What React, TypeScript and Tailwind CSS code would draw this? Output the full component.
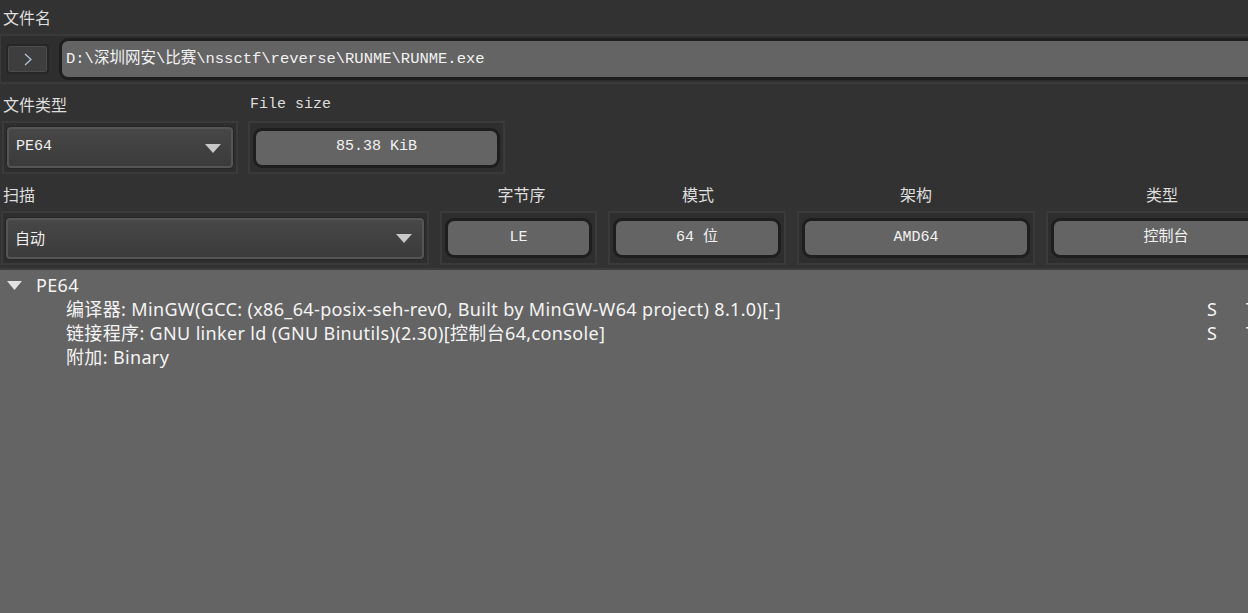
import React from "react";

const mono = "font-['Liberation_Mono','Noto_Sans_CJK_SC',monospace]";
const cjk = "font-['Noto_Sans_CJK_SC','Noto_Sans',sans-serif]";
const ui = "font-['Noto_Sans','Noto_Sans_CJK_SC',sans-serif]";

function Frame({ className, children }: { className?: string; children: React.ReactNode }) {
  return (
    <div className={"shrink-0 border-2 border-[#3a3a3a] bg-[#2e2e2e] flex items-center " + (className ?? "")}>
      {children}
    </div>
  );
}

function Value({ text, className }: { text: string; className?: string }) {
  return (
    <div
      className={
        "h-[40px] flex items-center justify-center rounded-[9px] border-[3px] border-[#1e1e1e] bg-[#646464] text-[15px] text-[#f2f2f2] " +
        mono +
        " " +
        (className ?? "")
      }
    >
      {text}
    </div>
  );
}

function Select({ text, className }: { text: string; className?: string }) {
  return (
    <div
      className={
        "h-[41px] flex items-center justify-between rounded-[4px] border-2 border-[#555555] bg-gradient-to-b from-[#474747] to-[#3b3b3b] pl-[7px] pr-[10px] text-[15px] text-[#f0f0f0] shadow-[0_0_0_1px_#262626] " +
        mono +
        " " +
        (className ?? "")
      }
    >
      <span>{text}</span>
      <svg width="16" height="10" viewBox="0 0 16 10">
        <polygon points="0,1 16,1 8,10" fill="#c8c8c8" />
      </svg>
    </div>
  );
}

const rows = [
  "编译器: MinGW(GCC: (x86_64-posix-seh-rev0, Built by MinGW-W64 project) 8.1.0)[-]",
  "链接程序: GNU linker ld (GNU Binutils)(2.30)[控制台64,console]",
];

export default function App() {
  return (
    <div className="h-[613px] w-[1248px] overflow-hidden bg-[#323232] flex flex-col">
      <div className={"h-[34px] flex items-center pl-[3px] text-[16px] text-[#dedede] " + cjk}>文件名</div>

      <Frame className="h-[50px] -mx-px pl-[5px] gap-[10px] w-[1300px]">
        <div className="w-[43px] h-[30px] rounded-[4px] border-2 border-[#262626] bg-[#3e3e3e] shadow-[inset_0_0_0_1px_#4c4c4c] flex items-center justify-center">
          <svg width="8" height="13" viewBox="0 0 8 13">
            <polyline points="1,1 7,6.5 1,12" fill="none" stroke="#b4c6e0" strokeWidth="1.2" />
          </svg>
        </div>
        <div
          className={
            "flex-1 h-[42px] flex items-center rounded-[9px] border-[3px] border-[#1e1e1e] bg-[#646464] pl-[4px] pt-[2px] text-[15.5px] text-[#f2f2f2] " +
            mono
          }
        >
          D:\深圳网安\比赛\nssctf\reverse\RUNME\RUNME.exe
        </div>
      </Frame>

      <div className="h-[37px] flex items-end pb-[5px]">
        <div className={"w-[250px] pl-[3px] text-[16px] text-[#dedede] " + cjk}>文件类型</div>
        <div className={"text-[15px] text-[#dedede] pb-[0px] " + mono}>File size</div>
      </div>

      <div className="flex gap-[10px] pl-[2px]">
        <Frame className="w-[236px] h-[53px] px-[3px]">
          <Select text="PE64" className="w-full" />
        </Frame>
        <Frame className="w-[257px] h-[53px] px-[3px]">
          <Value text="85.38 KiB" className="w-full" />
        </Frame>
      </div>

      <div className={"h-[37px] flex items-center w-[1300px] text-[16px] text-[#dedede] pt-[2px] " + cjk}>
        <div className="shrink-0 w-[439px] pl-[3px]">扫描</div>
        <div className="shrink-0 w-[165px] text-center">字节序</div>
        <div className="shrink-0 w-[188px] text-center">模式</div>
        <div className="shrink-0 w-[248px] text-center">架构</div>
        <div className="shrink-0 w-[244px] text-center">类型</div>
      </div>

      <div className="flex gap-[11px] pl-[1px] w-[1300px]">
        <Frame className="w-[428px] h-[54px] px-[3px]">
          <Select text="自动" className={"w-full " + cjk} />
        </Frame>
        <Frame className="w-[157px] h-[54px] px-[3px]">
          <Value text="LE" className="w-full" />
        </Frame>
        <Frame className="w-[178px] h-[54px] px-[3px]">
          <Value text="64 位" className="w-full" />
        </Frame>
        <Frame className="w-[238px] h-[54px] px-[3px]">
          <Value text="AMD64" className="w-full" />
        </Frame>
        <Frame className="w-[240px] h-[54px] px-[3px]">
          <Value text="控制台" className="w-full" />
        </Frame>
      </div>

      <div className={"mt-[3px] flex-1 bg-[#646464] border-t-2 border-[#3c3c3c] pt-[3px] text-[18px] tracking-[0.35px] text-[#f4f4f4] " + ui}>
        <div className="h-[24px] flex items-center">
          <div className="w-[36px] pl-[7px]">
            <svg width="15" height="9" viewBox="0 0 15 9">
              <polygon points="0,0 15,0 7.5,9" fill="#e2e2e2" />
            </svg>
          </div>
          <span>PE64</span>
        </div>
        {rows.map((r) => (
          <div key={r} className="h-[24px] flex items-center w-[1300px] pl-[66px]">
            <span className="flex-1 whitespace-nowrap">{r}</span>
            <span className="w-[39px]">S</span>
            <span className="w-[54px]">T</span>
          </div>
        ))}
        <div className="h-[24px] flex items-center pl-[66px]">附加: Binary</div>
      </div>
    </div>
  );
}
